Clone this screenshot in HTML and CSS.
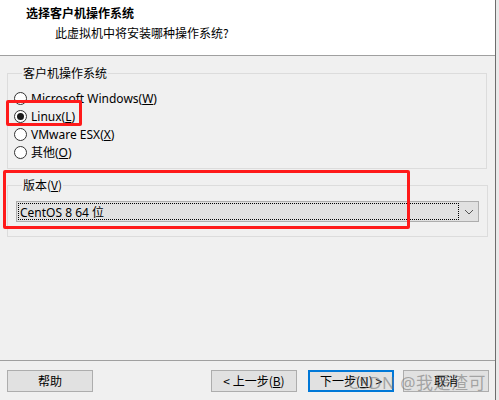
FILE: index.html
```html
<!DOCTYPE html>
<html lang="zh">
<head>
<meta charset="utf-8">
<title>新建虚拟机向导</title>
<link rel="stylesheet" href="styles.css">
</head>
<body>
<div class="window">
  <div class="header">
    <div class="title">选择客户机操作系统</div>
    <div class="subtitle">此虚拟机中将安装哪种操作系统?</div>
  </div>
  <div class="content">
    <fieldset class="group group-os">
      <legend>客户机操作系统</legend>
      <label class="radio"><span class="dot"></span><span class="rtext">Microsoft Windows(<u>W</u>)</span></label>
      <label class="radio"><span class="dot checked"></span><span class="rtext">Linux(<u>L</u>)</span></label>
      <label class="radio"><span class="dot"></span><span class="rtext">VMware ESX(<u>X</u>)</span></label>
      <label class="radio"><span class="dot"></span><span class="rtext">其他(<u>O</u>)</span></label>
    </fieldset>
    <fieldset class="group group-ver">
      <legend>版本(<u>V</u>)</legend>
      <div class="combo">
        <div class="combo-value"><span>CentOS 8 64 位</span></div>
        <div class="combo-arrow">
          <svg width="10" height="6" viewBox="0 0 10 6"><path d="M1 1 L5 5 L9 1" fill="none" stroke="#555" stroke-width="1"/></svg>
        </div>
      </div>
    </fieldset>
  </div>
  <div class="footer">
    <button class="btn">帮助</button>
    <div class="spacer"></div>
    <button class="btn">&lt; 上一步(<u>B</u>)</button>
    <button class="btn primary">下一步(<u>N</u>) &gt;</button>
    <button class="btn last">取消</button>
  </div>
  <div class="mark mark-linux"></div>
  <div class="mark mark-ver"></div>
  <div class="watermark">CSDN @我是渣可</div>
</div>
</body>
</html>
```
FILE: styles.css
```css
* { box-sizing: border-box; }
html, body { margin: 0; padding: 0; }
body {
  width: 499px;
  height: 400px;
  background: #e9e9e9;
  font-family: "Noto Sans", "Noto Sans CJK SC", sans-serif;
  font-size: 12px;
  color: #000;
  overflow: hidden;
}
.window {
  position: relative;
  width: 496px;
  height: 400px;
  background: #f0f0f0;
  border-right: 1px solid #6d6d6d;
  display: flex;
  flex-direction: column;
}
.header {
  height: 56px;
  background: #fff;
  border-bottom: 1px solid #a0a0a0;
  padding: 4px 0 0 26px;
}
.title {
  font-family: "Noto Sans CJK SC", sans-serif;
  font-weight: bold;
  font-size: 12px;
  line-height: 18px;
}
.subtitle {
  font-family: "Noto Sans CJK SC", sans-serif;
  padding-left: 29px;
  line-height: 18px;
  margin-top: 2px;
}
.content {
  flex: 1;
  padding: 8px 9px 0 7px;
}
.group {
  margin: 0;
  border: 1px solid #dcdcdc;
  padding: 0 8px;
  width: 480px;
}
.group legend {
  padding: 0 1px;
  margin-left: 6px;
  line-height: 18px;
  font-family: "Noto Sans CJK SC", sans-serif;
}
.group-os {
  height: 105px;
  padding-top: 7px;
}
.radio {
  display: flex;
  align-items: center;
  height: 18px;
  gap: 4px;
  margin-left: -2px;
  font-family: "Noto Sans", "Noto Sans CJK SC", sans-serif;
}
.rtext { white-space: nowrap; }
.dot {
  width: 13px;
  height: 13px;
  border: 1px solid #333;
  border-radius: 50%;
  background: #fff;
  display: flex;
  align-items: center;
  justify-content: center;
}
.dot.checked::after {
  content: "";
  width: 7px;
  height: 7px;
  border-radius: 50%;
  background: #1a1a1a;
}
.group-ver {
  margin-top: 7px;
  height: 61px;
  padding-top: 7px;
}
.combo {
  display: flex;
  height: 21px;
  width: 463px;
  border: 1px solid #adadad;
  background: #e1e1e1;
}
.combo-value {
  flex: 1;
  padding: 1px;
}
.combo-value span {
  display: flex;
  align-items: center;
  height: 100%;
  border: 1px dotted #000;
  padding-left: 1px;
  font-family: "Noto Sans", "Noto Sans CJK SC", sans-serif;
}
.combo-arrow {
  width: 18px;
  display: flex;
  align-items: center;
  justify-content: center;
}
.footer {
  height: 40px;
  border-top: 1px solid #a0a0a0;
  display: flex;
  align-items: flex-start;
  padding: 9px 6px 0 7px;
  gap: 11px;
}
.spacer { flex: 1; }
.btn {
  width: 86px;
  height: 22px;
  border: 1px solid #adadad;
  background: #e1e1e1;
  font-family: "Noto Sans CJK SC", "Noto Sans", sans-serif;
  font-size: 12px;
  color: #000;
  padding: 0;
  line-height: 18px;
}
.btn.last { margin-left: -2px; }
.btn.primary {
  border: 2px solid #0078d7;
}
.mark {
  position: absolute;
  border: 3px solid #ff1a1a;
  border-radius: 2px;
  pointer-events: none;
}
.mark-linux {
  left: 6px;
  top: 100px;
  width: 76px;
  height: 26px;
}
.mark-ver {
  left: 3px;
  top: 170px;
  width: 407px;
  height: 59px;
}
.watermark {
  position: absolute;
  left: 348px;
  top: 369px;
  font-family: "Noto Sans", "Noto Sans CJK SC", sans-serif;
  font-size: 17px;
  color: rgba(110, 110, 110, 0.55);
  letter-spacing: 0.5px;
  pointer-events: none;
}
```
